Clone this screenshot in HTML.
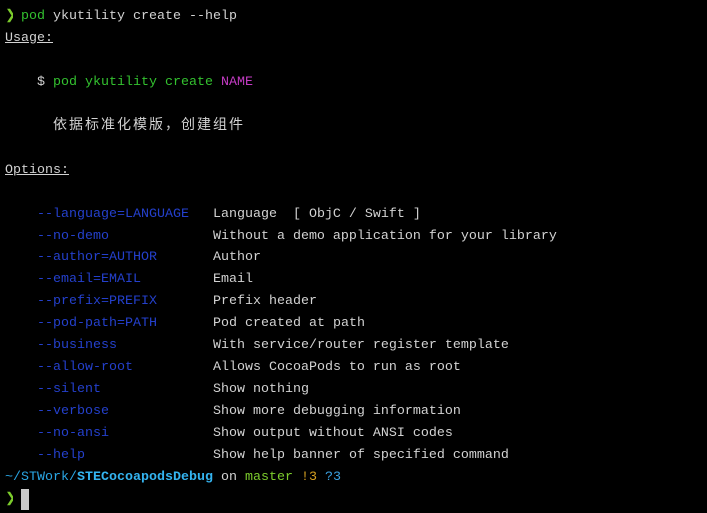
<!DOCTYPE html>
<html><head><meta charset="utf-8"><style>
html,body{margin:0;padding:0;background:#000;width:707px;height:512px;overflow:hidden}
pre{margin:0;position:absolute;left:5px;top:6px;font-family:"Liberation Mono","Noto Sans CJK SC",monospace;font-size:13.33px;line-height:21.95px;color:#d2d2d2;white-space:pre}
.g{color:#33c12f}.b{color:#2440cc}.m{color:#c43cc4}.u{text-decoration:underline}
.c{color:#2aa6e4}.cb{color:#34b4f0;font-weight:bold}.lg{color:#7ccc2c}.y{color:#d6a020}.q{color:#3aa0e0}
.ar{color:#7ccc2c;display:inline-block;width:8px;overflow:hidden;vertical-align:top}
.cj{font-size:14px;letter-spacing:2px}
.cur{display:inline-block;width:8px;height:21px;background:#c8c8c8;vertical-align:-6px}
</style></head><body>
<pre><span class="ar">❯</span> <span class="g">pod</span> ykutility create --help
<span class="u">Usage:</span>

    $ <span class="g">pod ykutility create </span><span class="m">NAME</span>

      <span class="cj">依据标准化模版，创建组件</span>

<span class="u">Options:</span>

    <span class="b">--language=LANGUAGE</span>   Language  [ ObjC / Swift ]
    <span class="b">--no-demo</span>             Without a demo application for your library
    <span class="b">--author=AUTHOR</span>       Author
    <span class="b">--email=EMAIL</span>         Email
    <span class="b">--prefix=PREFIX</span>       Prefix header
    <span class="b">--pod-path=PATH</span>       Pod created at path
    <span class="b">--business</span>            With service/router register template
    <span class="b">--allow-root</span>          Allows CocoaPods to run as root
    <span class="b">--silent</span>              Show nothing
    <span class="b">--verbose</span>             Show more debugging information
    <span class="b">--no-ansi</span>             Show output without ANSI codes
    <span class="b">--help</span>                Show help banner of specified command
<span class="c">~/STWork/</span><span class="cb">STECocoapodsDebug</span> on <span class="lg">master</span> <span class="y">!3</span> <span class="q">?3</span>
<span class="ar">❯</span> <span class="cur"></span></pre>
</body></html>
